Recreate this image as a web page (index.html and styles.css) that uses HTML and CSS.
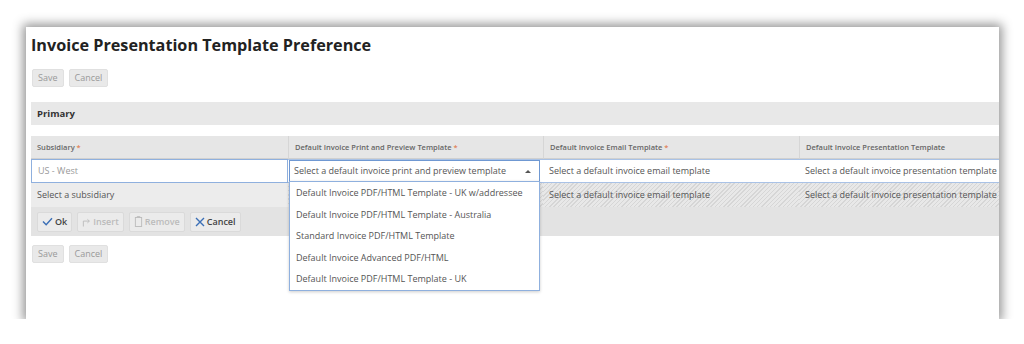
FILE: index.html
```html
<!DOCTYPE html>
<html lang="en">
<head>
  <meta charset="UTF-8">
  <title>Invoice Presentation Template Preference</title>
  <link rel="stylesheet" href="styles.css">
</head>
<body>
  <div class="card">
    <h1>Invoice Presentation Template Preference</h1>

    <div class="actions">
      <button class="btn">Save</button>
      <button class="btn">Cancel</button>
    </div>

    <div class="section">Primary</div>

    <div class="grid">
      <div class="head">Subsidiary <span class="req">*</span></div>
      <div class="head">Default Invoice Print and Preview Template <span class="req">*</span></div>
      <div class="head">Default Invoice Email Template <span class="req">*</span></div>
      <div class="head">Default Invoice Presentation Template</div>

      <div class="cell edit first"><span class="muted">US - West</span></div>
      <div class="cell edit select-cell">
        <div class="select">
          <span>Select a default invoice print and preview template</span>
          <span class="caret"></span>
        </div>
        <ul class="listbox">
          <li>Default Invoice PDF/HTML Template - UK w/addressee</li>
          <li>Default Invoice PDF/HTML Template - Australia</li>
          <li>Standard Invoice PDF/HTML Template</li>
          <li>Default Invoice Advanced PDF/HTML</li>
          <li>Default Invoice PDF/HTML Template - UK</li>
        </ul>
      </div>
      <div class="cell edit">Select a default invoice email template</div>
      <div class="cell edit">Select a default invoice presentation template</div>

      <div class="cell row plain">Select a subsidiary</div>
      <div class="cell row hatch"></div>
      <div class="cell row hatch">Select a default invoice email template</div>
      <div class="cell row hatch">Select a default invoice presentation template</div>

      <div class="toolbar">
        <button class="tbtn on">
          <svg width="11" height="9" viewBox="0 0 12 10"><polyline points="1,5 4.5,8.5 11,1.5" fill="none" stroke="#3b6fb6" stroke-width="1.6"/></svg>
          Ok
        </button>
        <button class="tbtn">
          <svg width="9" height="10" viewBox="0 0 10 11"><path d="M1.5 10.5V4.5H8M6 2.5l2.2 2-2.2 2" fill="none" stroke="#bbb" stroke-width="1"/></svg>
          Insert
        </button>
        <button class="tbtn">
          <svg width="9" height="11" viewBox="0 0 10 12"><rect x="1.5" y="1.5" width="7" height="10" fill="none" stroke="#bbb" stroke-width="1"/><path d="M3.5 1.5v-1h3v1" fill="none" stroke="#bbb"/></svg>
          Remove
        </button>
        <button class="tbtn on">
          <svg width="10" height="10" viewBox="0 0 10 10"><path d="M1 1l8 8M9 1L1 9" fill="none" stroke="#3b6fb6" stroke-width="1.4"/></svg>
          Cancel
        </button>
      </div>
    </div>

    <div class="actions bottom">
      <button class="btn">Save</button>
      <button class="btn">Cancel</button>
    </div>
  </div>
</body>
</html>
```

FILE: styles.css
```css
body {
  margin: 0;
  background: #fff;
  font-family: "Open Sans", "Liberation Sans", sans-serif;
  color: #555;
}

.card {
  width: 973px;
  height: 292px;
  margin: 27px 0 0 26px;
  padding-left: 5px;
  box-sizing: border-box;
  background: #fff;
  box-shadow: 0 0 10px 3px rgba(0,0,0,0.42);
  overflow: hidden;
}

h1 {
  margin: 0;
  padding-top: 7px;
  font-size: 16.2px;
  line-height: 22px;
  font-weight: 700;
  color: #222;
}

.actions {
  display: flex;
  gap: 5px;
  margin-top: 13px;
  padding-left: 1px;
}

.actions.bottom {
  margin-top: 9px;
}

.btn {
  height: 18px;
  padding: 0 5px;
  border: 1px solid #e0e0e0;
  border-radius: 2px;
  background: #e9e9e9;
  color: #999;
  font-family: inherit;
  font-size: 9px;
  line-height: 16px;
}

.section {
  margin-top: 15px;
  height: 23px;
  line-height: 23px;
  padding-left: 6px;
  background: #e8e8e8;
  font-size: 9.5px;
  font-weight: 700;
  color: #333;
}

.grid {
  margin-top: 11px;
  display: grid;
  grid-template-columns: 257px 255px 256px 200px;
  font-size: 9px;
}

.head {
  height: 22px;
  line-height: 22px;
  padding-left: 6px;
  background: #e6e6e6;
  border-left: 1px solid #d6d6d6;
  border-bottom: 1px solid #d0d0d0;
  font-size: 7.5px;
  font-weight: 600;
  color: #666;
}

.head:first-child {
  border-left: none;
}

.req {
  color: #e0825a;
}

.cell {
  height: 24px;
  line-height: 24px;
  padding-left: 6px;
  white-space: nowrap;
  overflow: hidden;
}

.edit {
  background: #fff;
  border-top: 1px solid #a9c2e6;
  border-bottom: 1px solid #a9c2e6;
  height: 22px;
  line-height: 22px;
}

.edit.first {
  border: 1px solid #8fb0de;
}

.muted {
  color: #9a9a9a;
}

.select-cell {
  position: relative;
  overflow: visible;
  padding: 0 3px 0 1px;
}

.select {
  display: flex;
  align-items: center;
  justify-content: space-between;
  height: 20px;
  padding: 0 5px 0 4px;
  border: 1px solid #6f98d2;
  background: #fff;
  color: #555;
}

.caret {
  width: 0;
  height: 0;
  border-left: 3px solid transparent;
  border-right: 3px solid transparent;
  border-bottom: 3px solid #555;
  margin-right: 3px;
}

.listbox {
  position: absolute;
  top: 21px;
  left: 1px;
  width: 249px;
  margin: 0;
  padding: 0;
  list-style: none;
  background: #fff;
  border: 1px solid #8fb0de;
  box-shadow: 0 1px 3px rgba(0,0,0,0.2);
  z-index: 2;
}

.listbox li {
  height: 21.6px;
  line-height: 21.6px;
  padding-left: 6px;
  font-size: 9px;
  color: #555;
}

.plain {
  background: #ececec;
}

.hatch {
  background: repeating-linear-gradient(-45deg, #e8e8e8 0 2px, #d6d6d6 2px 3px);
}

.toolbar {
  grid-column: 1 / -1;
  display: flex;
  gap: 5px;
  height: 29px;
  align-items: center;
  padding-left: 6px;
  background: #e3e3e3;
}

.tbtn {
  display: flex;
  align-items: center;
  gap: 2px;
  height: 20px;
  padding: 0 4px;
  border: 1px solid #dadada;
  border-radius: 2px;
  background: #ebebeb;
  font-family: inherit;
  font-size: 9px;
  font-weight: 600;
  color: #bbb;
}

.tbtn.on {
  color: #444;
}
```
